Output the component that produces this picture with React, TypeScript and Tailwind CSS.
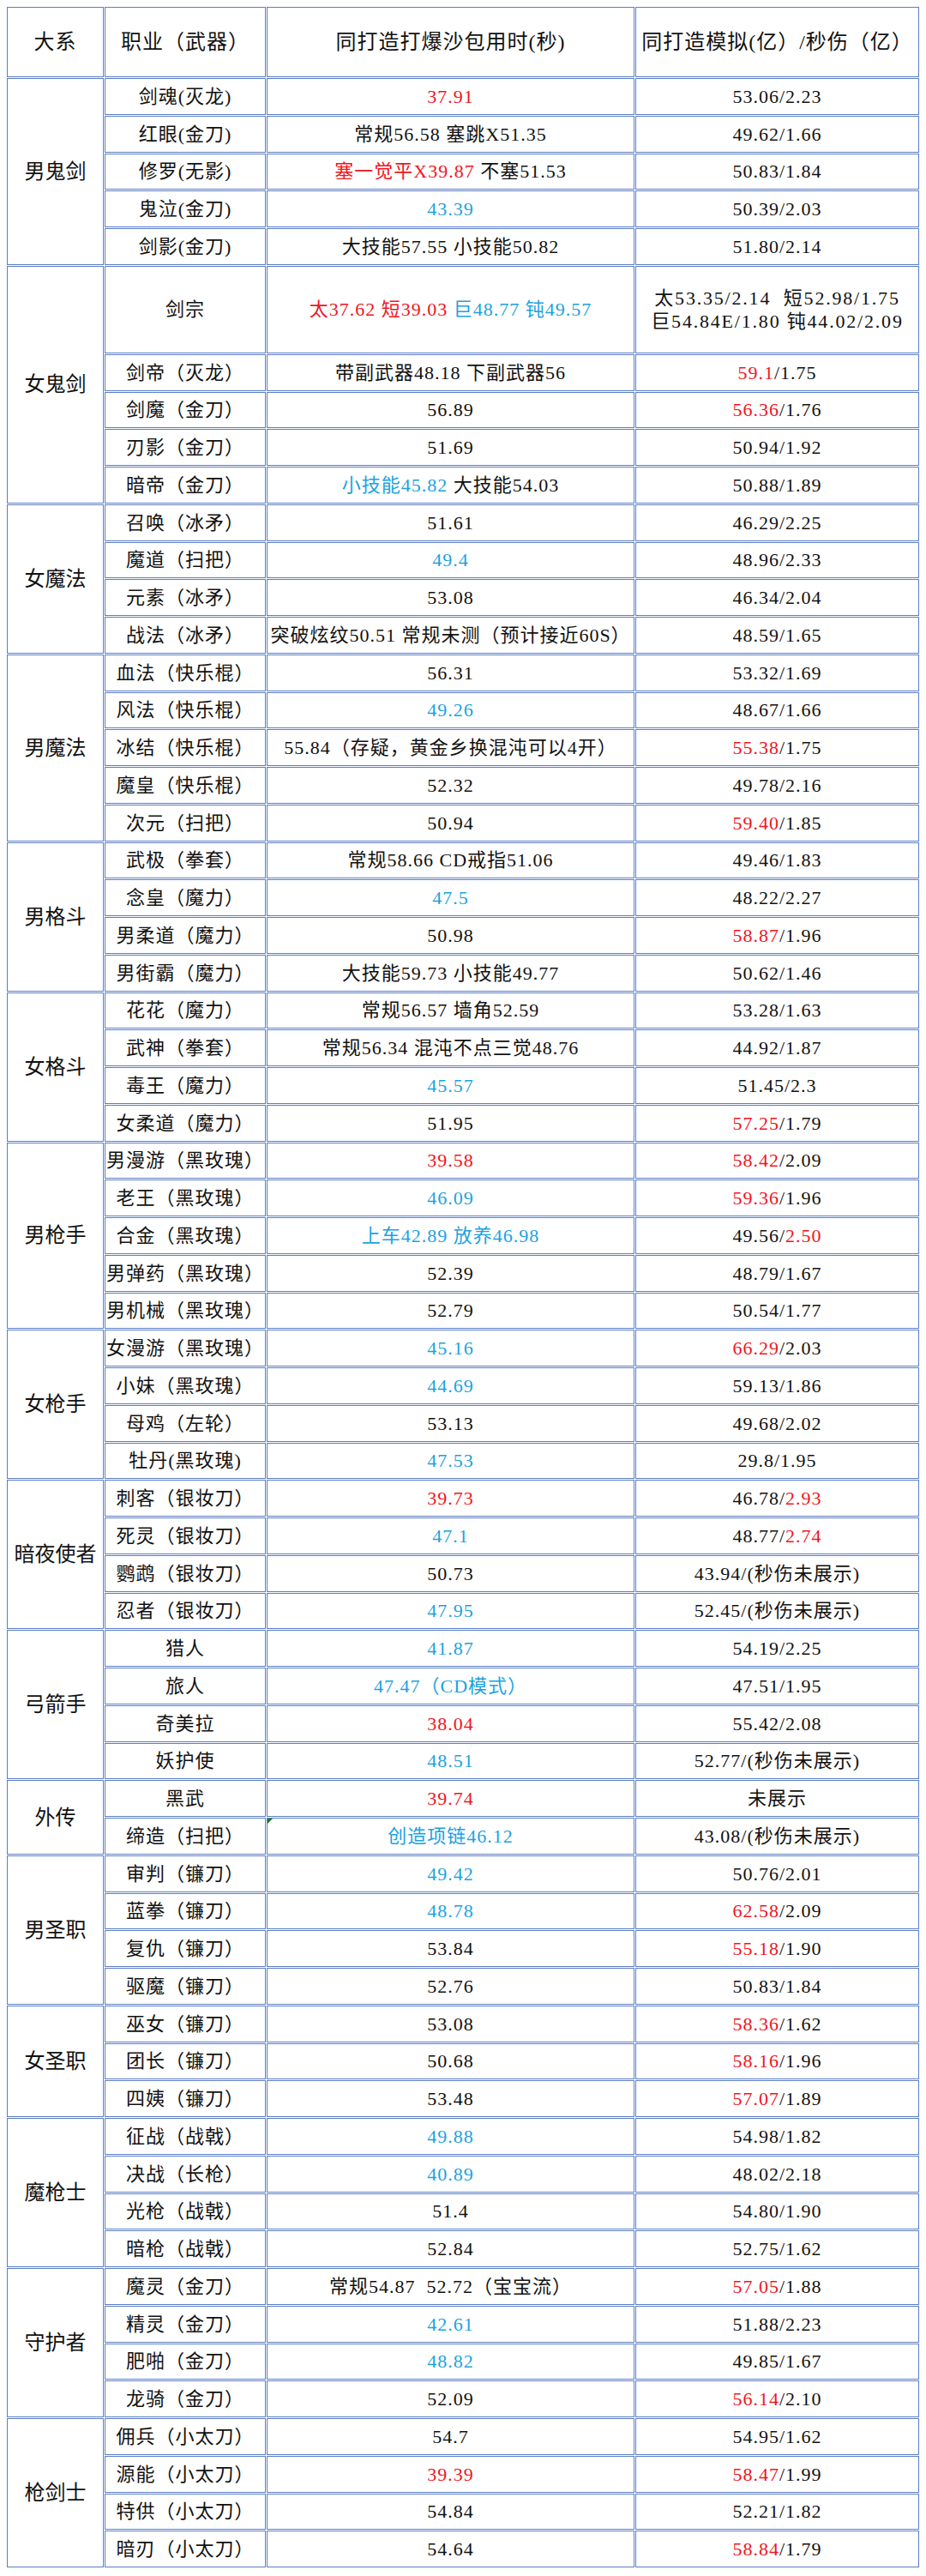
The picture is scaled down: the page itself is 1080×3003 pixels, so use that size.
import React from 'react';

type Tone = 'r' | 'b';
type Seg = string | [string, Tone];

interface Job {
  name: string;
  time: Seg[];
  dmg: Seg[];
  dmg2?: Seg[];
  tall?: boolean;
  flag?: boolean;
}

interface Group {
  title: string;
  jobs: Job[];
}

const groups: Group[] = [
  {
    title: '男鬼剑',
    jobs: [
      { name: '剑魂(灭龙)', time: [['37.91', 'r']], dmg: ['53.06/2.23'] },
      { name: '红眼(金刀)', time: ['常规56.58 塞跳X51.35'], dmg: ['49.62/1.66'] },
      { name: '修罗(无影)', time: [['塞一觉平X39.87', 'r'], ' 不塞51.53'], dmg: ['50.83/1.84'] },
      { name: '鬼泣(金刀)', time: [['43.39', 'b']], dmg: ['50.39/2.03'] },
      { name: '剑影(金刀)', time: ['大技能57.55 小技能50.82'], dmg: ['51.80/2.14'] },
    ],
  },
  {
    title: '女鬼剑',
    jobs: [
      {
        name: '剑宗',
        time: [['太37.62 短39.03 ', 'r'], ['巨48.77 钝49.57', 'b']],
        dmg: ['太53.35/2.14  短52.98/1.75'],
        dmg2: ['巨54.84E/1.80 钝44.02/2.09'],
        tall: true,
      },
      { name: '剑帝（灭龙）', time: ['带副武器48.18 下副武器56'], dmg: [['59.1', 'r'], '/1.75'] },
      { name: '剑魔（金刀）', time: ['56.89'], dmg: [['56.36', 'r'], '/1.76'] },
      { name: '刃影（金刀）', time: ['51.69'], dmg: ['50.94/1.92'] },
      { name: '暗帝（金刀）', time: [['小技能45.82', 'b'], ' 大技能54.03'], dmg: ['50.88/1.89'] },
    ],
  },
  {
    title: '女魔法',
    jobs: [
      { name: '召唤（冰矛）', time: ['51.61'], dmg: ['46.29/2.25'] },
      { name: '魔道（扫把）', time: [['49.4', 'b']], dmg: ['48.96/2.33'] },
      { name: '元素（冰矛）', time: ['53.08'], dmg: ['46.34/2.04'] },
      { name: '战法（冰矛）', time: ['突破炫纹50.51 常规未测（预计接近60S）'], dmg: ['48.59/1.65'] },
    ],
  },
  {
    title: '男魔法',
    jobs: [
      { name: '血法（快乐棍）', time: ['56.31'], dmg: ['53.32/1.69'] },
      { name: '风法（快乐棍）', time: [['49.26', 'b']], dmg: ['48.67/1.66'] },
      { name: '冰结（快乐棍）', time: ['55.84（存疑，黄金乡换混沌可以4开）'], dmg: [['55.38', 'r'], '/1.75'] },
      { name: '魔皇（快乐棍）', time: ['52.32'], dmg: ['49.78/2.16'] },
      { name: '次元（扫把）', time: ['50.94'], dmg: [['59.40', 'r'], '/1.85'] },
    ],
  },
  {
    title: '男格斗',
    jobs: [
      { name: '武极（拳套）', time: ['常规58.66 CD戒指51.06'], dmg: ['49.46/1.83'] },
      { name: '念皇（魔力）', time: [['47.5', 'b']], dmg: ['48.22/2.27'] },
      { name: '男柔道（魔力）', time: ['50.98'], dmg: [['58.87', 'r'], '/1.96'] },
      { name: '男街霸（魔力）', time: ['大技能59.73 小技能49.77'], dmg: ['50.62/1.46'] },
    ],
  },
  {
    title: '女格斗',
    jobs: [
      { name: '花花（魔力）', time: ['常规56.57 墙角52.59'], dmg: ['53.28/1.63'] },
      { name: '武神（拳套）', time: ['常规56.34 混沌不点三觉48.76'], dmg: ['44.92/1.87'] },
      { name: '毒王（魔力）', time: [['45.57', 'b']], dmg: ['51.45/2.3'] },
      { name: '女柔道（魔力）', time: ['51.95'], dmg: [['57.25', 'r'], '/1.79'] },
    ],
  },
  {
    title: '男枪手',
    jobs: [
      { name: '男漫游（黑玫瑰）', time: [['39.58', 'r']], dmg: [['58.42', 'r'], '/2.09'] },
      { name: '老王（黑玫瑰）', time: [['46.09', 'b']], dmg: [['59.36', 'r'], '/1.96'] },
      { name: '合金（黑玫瑰）', time: [['上车42.89 放养46.98', 'b']], dmg: ['49.56/', ['2.50', 'r']] },
      { name: '男弹药（黑玫瑰）', time: ['52.39'], dmg: ['48.79/1.67'] },
      { name: '男机械（黑玫瑰）', time: ['52.79'], dmg: ['50.54/1.77'] },
    ],
  },
  {
    title: '女枪手',
    jobs: [
      { name: '女漫游（黑玫瑰）', time: [['45.16', 'b']], dmg: [['66.29', 'r'], '/2.03'] },
      { name: '小妹（黑玫瑰）', time: [['44.69', 'b']], dmg: ['59.13/1.86'] },
      { name: '母鸡（左轮）', time: ['53.13'], dmg: ['49.68/2.02'] },
      { name: '牡丹(黑玫瑰)', time: [['47.53', 'b']], dmg: ['29.8/1.95'] },
    ],
  },
  {
    title: '暗夜使者',
    jobs: [
      { name: '刺客（银妆刀）', time: [['39.73', 'r']], dmg: ['46.78/', ['2.93', 'r']] },
      { name: '死灵（银妆刀）', time: [['47.1', 'b']], dmg: ['48.77/', ['2.74', 'r']] },
      { name: '鹦鹉（银妆刀）', time: ['50.73'], dmg: ['43.94/(秒伤未展示)'] },
      { name: '忍者（银妆刀）', time: [['47.95', 'b']], dmg: ['52.45/(秒伤未展示)'] },
    ],
  },
  {
    title: '弓箭手',
    jobs: [
      { name: '猎人', time: [['41.87', 'b']], dmg: ['54.19/2.25'] },
      { name: '旅人', time: [['47.47（CD模式）', 'b']], dmg: ['47.51/1.95'] },
      { name: '奇美拉', time: [['38.04', 'r']], dmg: ['55.42/2.08'] },
      { name: '妖护使', time: [['48.51', 'b']], dmg: ['52.77/(秒伤未展示)'] },
    ],
  },
  {
    title: '外传',
    jobs: [
      { name: '黑武', time: [['39.74', 'r']], dmg: ['未展示'] },
      { name: '缔造（扫把）', time: [['创造项链46.12', 'b']], dmg: ['43.08/(秒伤未展示)'], flag: true },
    ],
  },
  {
    title: '男圣职',
    jobs: [
      { name: '审判（镰刀）', time: [['49.42', 'b']], dmg: ['50.76/2.01'] },
      { name: '蓝拳（镰刀）', time: [['48.78', 'b']], dmg: [['62.58', 'r'], '/2.09'] },
      { name: '复仇（镰刀）', time: ['53.84'], dmg: [['55.18', 'r'], '/1.90'] },
      { name: '驱魔（镰刀）', time: ['52.76'], dmg: ['50.83/1.84'] },
    ],
  },
  {
    title: '女圣职',
    jobs: [
      { name: '巫女（镰刀）', time: ['53.08'], dmg: [['58.36', 'r'], '/1.62'] },
      { name: '团长（镰刀）', time: ['50.68'], dmg: [['58.16', 'r'], '/1.96'] },
      { name: '四姨（镰刀）', time: ['53.48'], dmg: [['57.07', 'r'], '/1.89'] },
    ],
  },
  {
    title: '魔枪士',
    jobs: [
      { name: '征战（战戟）', time: [['49.88', 'b']], dmg: ['54.98/1.82'] },
      { name: '决战（长枪）', time: [['40.89', 'b']], dmg: ['48.02/2.18'] },
      { name: '光枪（战戟）', time: ['51.4'], dmg: ['54.80/1.90'] },
      { name: '暗枪（战戟）', time: ['52.84'], dmg: ['52.75/1.62'] },
    ],
  },
  {
    title: '守护者',
    jobs: [
      { name: '魔灵（金刀）', time: ['常规54.87  52.72（宝宝流）'], dmg: [['57.05', 'r'], '/1.88'] },
      { name: '精灵（金刀）', time: [['42.61', 'b']], dmg: ['51.88/2.23'] },
      { name: '肥啪（金刀）', time: [['48.82', 'b']], dmg: ['49.85/1.67'] },
      { name: '龙骑（金刀）', time: ['52.09'], dmg: [['56.14', 'r'], '/2.10'] },
    ],
  },
  {
    title: '枪剑士',
    jobs: [
      { name: '佣兵（小太刀）', time: ['54.7'], dmg: ['54.95/1.62'] },
      { name: '源能（小太刀）', time: [['39.39', 'r']], dmg: [['58.47', 'r'], '/1.99'] },
      { name: '特供（小太刀）', time: ['54.84'], dmg: ['52.21/1.82'] },
      { name: '暗刃（小太刀）', time: ['54.64'], dmg: [['58.84', 'r'], '/1.79'] },
    ],
  },
];

function Text({ segs }: { segs: Seg[] }) {
  return (
    <>
      {segs.map((s, i) =>
        typeof s === 'string' ? (
          <span key={i}>{s}</span>
        ) : (
          <span key={i} className={s[1] === 'r' ? 'text-[#f2141e]' : 'text-[#1ba3e0]'}>
            {s[0]}
          </span>
        )
      )}
    </>
  );
}

const cell = 'border border-[#5b7ec6] p-0 text-center align-middle whitespace-pre';

export default function App() {
  return (
    <div className="min-h-[3003px] bg-white pl-[7px] pt-[7px] text-[#111] font-['Liberation_Serif','Noto_Sans_CJK_SC',serif]">
      <table className="w-[1066px] table-fixed border-separate border-spacing-[1px]">
        <thead className="text-[24px] tracking-[1px]">
          <tr>
            <th className={`${cell} h-[82px] w-[113px] font-normal`}>大系</th>
            <th className={`${cell} w-[188px] font-normal`}>职业（武器）</th>
            <th className={`${cell} w-[429px] font-normal`}>同打造打爆沙包用时(秒)</th>
            <th className={`${cell} w-[331px] font-normal`}>同打造模拟(亿）/秒伤（亿）</th>
          </tr>
        </thead>
        <tbody className="text-[22px] tracking-[1px]">
          {groups.map((g) =>
            g.jobs.map((job, idx) => (
              <tr key={g.title + job.name}>
                {idx === 0 && (
                  <td rowSpan={g.jobs.length} className={`${cell} text-[24px] tracking-normal`}>
                    {g.title}
                  </td>
                )}
                <td className={`${cell} ${job.tall ? 'h-[102px]' : 'h-[42.75px]'}`}>{job.name}</td>
                <td className={`${cell} relative`}>
                  {job.flag && (
                    <svg className="absolute left-0 top-0" width="6" height="6" viewBox="0 0 6 6">
                      <polygon points="0,0 6,0 0,6" fill="#157a1c" />
                    </svg>
                  )}
                  <Text segs={job.time} />
                </td>
                <td className={`${cell} ${job.dmg2 ? 'leading-[27px] tracking-[1.8px]' : ''}`}>
                  <Text segs={job.dmg} />
                  {job.dmg2 && (
                    <>
                      <br />
                      <Text segs={job.dmg2} />
                    </>
                  )}
                </td>
              </tr>
            ))
          )}
        </tbody>
      </table>
    </div>
  );
}
